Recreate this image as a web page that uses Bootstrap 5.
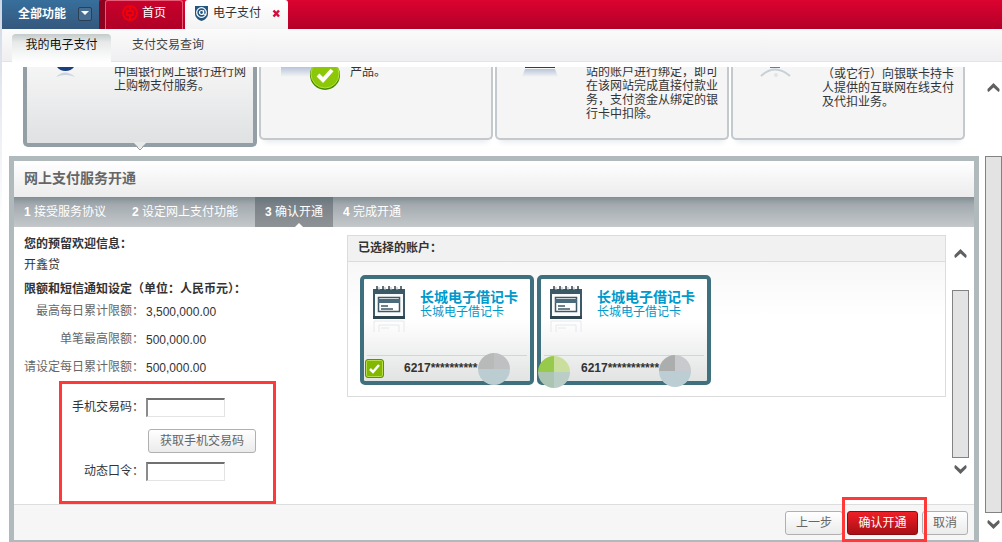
<!DOCTYPE html>
<html lang="zh-CN">
<head>
<meta charset="utf-8">
<meta name="viewport" content="width=device-width, initial-scale=1">
<title>电子支付</title>
<link href="https://cdn.jsdelivr.net/npm/bootstrap@5.3.0/dist/css/bootstrap.min.css" rel="stylesheet">
<style>
body{font:12px/14px "Liberation Sans","Noto Sans CJK SC",sans-serif;color:#333;padding-left:2px;overflow:hidden;
  background:linear-gradient(#cdd8e6,#dfe4ec 30%,#fff) no-repeat 0 0/2px 225px #fff}
a{color:inherit;text-decoration:none}
p{margin:0}
/* top bar */
.topbar{height:29px;background:linear-gradient(#dc0330,#b30028)}
.all-btn{width:97px;border:0;color:#fff;font-weight:bold;padding:0 7px 2px 16px;background:linear-gradient(#376f9c,#35587d)}
.all-btn .drop{width:14px;height:14px;border:1px solid #2b3f55;border-radius:2px;background:#456e92}
.tab-home{margin:0 2px 0 6px;width:78px;color:#fff;border:1px solid #e85a76;border-bottom:0;border-radius:3px 3px 0 0;background:linear-gradient(#c8022c,#b00027)}
.tab-gap{box-shadow:-6px 0 #8a0420}
.tab-pay{width:103px;background:linear-gradient(#fff,#f3f3f3);border-radius:3px 3px 0 0;padding:0 7px 3px 9px;color:#333}
.x-btn{border:0;background:none;padding:0;width:9px}
.subnav{height:33px;background:linear-gradient(#fbfbfb,#efeff1);border-bottom:1px solid #e4e4e6;padding:5px 0 0 10px}
.subnav a{height:28px;line-height:22px;color:#444}
.subnav a.on{width:99px;margin-right:21px;color:#111;border-radius:4px 4px 0 0;background:linear-gradient(#c3cbcb,#e8eaea 30%,#fff)}
.stage{margin-top:5px}
/* services */
.services{display:grid;grid-template-columns:repeat(4,minmax(0,1fr));height:89px;overflow:hidden;gap:2px;margin:0 14px 0 21px}
.svc{height:73px;border:2px solid #c3c9cd;border-top:0;border-radius:0 0 5px 5px;background:#f5f5f5;box-shadow:0 7px 6px -5px #e6e8ea}
.svc .pic{width:89px;height:26px;flex:none}
.svc p{margin-top:-2px;white-space:nowrap}
.svc.low p{margin-top:0}
.svc.on{position:relative;height:80px;border:4px solid #949fa5;border-top:0;background:linear-gradient(#f5f5f5,#dfe1e2);box-shadow:none}
.svc.on .pic{width:87px}
.svc .notch{position:absolute;left:50%;bottom:-8px;margin-left:-7px}
/* panel */
.opening{margin-left:7px;border:5px solid #b0b9bc;border-bottom-width:2px}
.opening h1{font-size:14px;font-weight:bold;color:#666;height:36px;line-height:35px;margin:0;padding-left:10px;background:linear-gradient(#fff,#ececec)}
.steps{height:30px;line-height:30px;color:#fff;list-style:none;margin:0;padding:0;background:linear-gradient(#808e94,#a3aaaf 25%,#c4c8cb)}
.steps li{padding:0 10px}
.steps li:nth-child(1){padding-right:16px}
.steps li:nth-child(2){padding-right:17px}
.steps li.on{position:relative;background:linear-gradient(#66757c,#7b8388 30%,#8f9397)}
.steps li.on::after{content:"";position:absolute;left:50%;bottom:0;margin-left:1px;border:4px solid transparent;border-top:0;border-bottom-color:#fff}
.info{width:333px;flex:none;padding:6px 0 0 10px}
.info p{line-height:20px}
.info .welcome{line-height:22px}
.info .heading{line-height:16px;margin-top:6px}
.limits dt{width:120px;font-weight:normal;text-align:right;color:#666}
.limits>div{height:28px;gap:2px}
.limits dd{margin:2px 0 0}
.verify{margin-left:35px;width:217px;border:3px solid #ff3838;padding:8px 0 15px}
.verify>div{height:30px;gap:2px}
.verify label{width:82px;text-align:right}
.verify .code-row{margin-top:4px;padding-left:86px}
.verify input{width:79px;height:19px;padding:0 2px;border:solid;border-width:2px 1px 1px 2px;border-color:#707070 #e3e3e3 #e3e3e3 #8c8c8c;outline:0}
.btn-plain,.btn-go{height:24px;padding:0;line-height:20px;font-size:12px;border-radius:3px;border:1px solid #b0b0b0}
.btn-plain{color:#666;background:linear-gradient(#fff,#ebebeb)}
.btn-get{width:108px}
.btn-prev{width:58px}
.btn-cancel{width:46px}
.btn-go{color:#fff;border-color:#8c0a10;background:linear-gradient(#ef1f26,#a80f15);width:71px}
.accounts{margin:8px 6px 0 0;height:162px;border:1px solid #dcdcdc;background:linear-gradient(#f3f3f3,#fff 50%)}
.accounts h2{font-size:12px;line-height:25px;height:26px;font-weight:bold;margin:0;padding-left:10px;border-bottom:1px solid #dcdcdc;background:#f1f1f1}
.acct-list{gap:3px;padding:13px 12px}
.acct{position:relative;width:174px;height:110px;border:4px solid #3f707d;border-radius:5px;background:linear-gradient(#fff 40%,#e2e3e3)}
.acct .top{height:77px;padding:6px 0 0 7px;gap:14px;margin:0 3px;border-bottom:1px solid #d4d6d6}
.acct svg.cal{flex:none;margin-left:-2px}
.acct strong{display:block;font-size:14px;line-height:16px;color:#09c}
.acct .top div{color:#09c;padding-top:4px;white-space:nowrap}
.acct .no{font-weight:bold;padding-left:40px;line-height:24px}
.acct input{appearance:none;position:absolute;left:1px;bottom:3px;width:19px;height:19px;margin:0;border:1px solid #5d8f00;border-radius:3px;box-shadow:inset 0 0 0 1px #b5dd48;
  background:url("data:image/svg+xml,%3Csvg xmlns='http://www.w3.org/2000/svg' viewBox='0 0 17 17'%3E%3Cpath d='M4 9l3 3 6-7' fill='none' stroke='%23fff' stroke-width='2.5'/%3E%3C/svg%3E") #83b800}
.blot{position:absolute;width:32px;height:32px;border-radius:50%;right:20px;bottom:-4px;background:conic-gradient(#bfc0c1 25%,#bccdd2 0 75%,#b8b9b9 0)}
.blot.low{right:16px;bottom:-6px;background:conic-gradient(#c8cace 25%,#bccdd4 0 75%,#acaeae 0)}
.blot.green{left:-3px;right:auto;bottom:-7px;background:conic-gradient(#cadf9d 25%,#bacdc6 0 50%,#acc5b3 0 75%,#97c94a 0)}
.sbar{width:17px;flex:none}
.thumb{flex:1;width:17px;background:#e3e3e3;border:1px solid #828282}
.sbar svg{flex:none;display:block;margin:0 auto}
.inner-bar{margin:22px 5px 30px 0}
.inner-bar .thumb{margin:32px 0 7px}
.outer-bar{margin:16px 0 13px 6px}
.outer-bar .thumb{margin:64px 0 7px}
.foot{height:36px;border-top:1px solid #ddd;background:#f6f6f6;padding:6px 6px 0;gap:4px}
.marked{position:relative;height:24px}
.marked::after{content:"";position:absolute;inset:-14px -9px -7px -5px;border:3px solid #ff3838;pointer-events:none}
</style>
</head>
<body>
<svg class="d-none" aria-hidden="true">
  <symbol id="cal" viewBox="0 0 34 48">
    <path d="M2 5h30v27H2z" fill="#fafbfb" stroke="#3e5966" stroke-width="2"/>
    <path d="M1 4h32v5H1z" fill="#3e5966"/>
    <path d="M5 1v4m6-4v4m6-4v4m6-4v4m6-4v4" stroke="#2e4450" stroke-width="1.5"/>
    <path d="M7 2v3m6-3v3m6-3v3m6-3v3" stroke="#a9bac2" stroke-width="1"/>
    <path d="M1 31h32v3H1z" fill="#2e4652"/>
    <path d="M6.500 12.500h21v14h-21z" fill="#fff" stroke="#3e5966" stroke-width="1.500"/>
    <path d="M6 14h22v4H6z" fill="#4b6a7b"/>
    <path d="M9 21h7M9 24h12" stroke="#3e5966" stroke-width="1.500"/>
    <path d="M2 47V36h30v11M7 47v-7h20v7M9 43h8" fill="none" stroke="#e4e8ea"/>
  </symbol>
  <symbol id="up" viewBox="0 0 13 9"><path d="M.5 8V6l6-6 6 6v2l-1 1-5-4.500-5 4.500z" fill="#606060"/></symbol>
  <symbol id="down" viewBox="0 0 13 9"><path d="M.5 1v2l6 6 6-6V1l-1-1-5 4.500L1.500 0z" fill="#606060"/></symbol>
</svg>

<header class="topbar d-flex">
  <button class="all-btn d-flex align-items-center justify-content-between">全部功能
    <span class="drop d-flex align-items-center justify-content-center"><svg width="8" height="5" viewBox="0 0 8 5"><path d="M0 0h8L4 4z" fill="#fff"/></svg></span>
  </button>
  <a href="#" class="tab-home tab-gap d-flex align-items-center justify-content-center gap-1 pb-1">
    <svg width="16" height="16" viewBox="0 0 16 16" fill="none" stroke="#f00009" stroke-width="2"><circle cx="8" cy="8" r="7"/><path d="M5 6h6v4H5zM8 2v4m0 4v4"/></svg>首页</a>
  <div class="tab-pay d-flex align-items-center">
    <svg width="15" height="15" viewBox="0 0 15 15"><path d="M1 0h13v8c0 3-3 6-6.500 7C4 14 1 11 1 8z" fill="#24577f"/><circle cx="7.500" cy="6.500" r="4.800" fill="none" stroke="#fff" stroke-width="1.200"/><circle cx="7.500" cy="6.500" r="2" fill="none" stroke="#fff" stroke-width="1.200"/><path d="M9.700 4v4.300h2" fill="none" stroke="#fff"/></svg>
    <a href="#" class="ms-1 me-auto text-nowrap">电子支付</a>
    <button class="x-btn" aria-label="关闭"><svg class="d-block" width="9" height="9" viewBox="0 0 9 9"><path d="M1.500 1.500l5.500 6m0-6l-5.500 6" stroke="#d0103a" stroke-width="2.500"/></svg></button>
  </div>
</header>
<nav class="subnav d-flex"><a href="#" class="on text-center">我的电子支付</a><a href="#">支付交易查询</a></nav>

<div class="stage d-flex">
<main class="flex-grow-1">
  <section class="services">
    <div class="svc on d-flex">
      <svg class="pic" viewBox="0 0 87 26"><path d="M30 0h17q-3 4-8.500 4T30 0z" fill="#173f82"/><path d="M29 10q9-9 19 0-9-4-19 0z" fill="#cbd3df"/></svg>
      <p>中国银行网上银行进行网<br>上购物支付服务。</p>
      <svg class="notch" width="14" height="9" viewBox="0 0 14 9"><path d="M1 1l6 6 6-6V0H1z" fill="#e8eaea"/><path d="M1 2l6 6 6-6" fill="none" stroke="#949fa5"/></svg>
    </div>
    <div class="svc d-flex">
      <svg class="pic" viewBox="0 0 89 26"><defs><linearGradient id="rf" x2="0" y2="1"><stop stop-color="#b8c5da"/><stop offset="1" stop-color="#f5f5f5"/></linearGradient></defs><path d="M20 0h34v10H20z" fill="url(#rf)"/><circle cx="64" cy="8" r="15" fill="#4b8b00"/><circle cx="64" cy="7" r="14" fill="#8cc808" stroke="#b1e23d"/><path d="M57 8l5 5 9-10" fill="none" stroke="#fff" stroke-width="4"/></svg>
      <p>产品。</p>
    </div>
    <div class="svc d-flex">
      <svg class="pic" viewBox="0 0 89 26"><path d="M28 0h30v1H28z" fill="#173f82"/><path d="M28 2h30l3 8H25z" fill="url(#rf)"/></svg>
      <p>站的账户进行绑定，即可<br>在该网站完成直接付款业<br>务，支付资金从绑定的银<br>行卡中扣除。</p>
    </div>
    <div class="svc low d-flex">
      <svg class="pic" viewBox="0 0 89 26"><path d="M37 0h10v1H37z" fill="#5d7cad"/><path d="M28 9q14-13 29 0" fill="none" stroke="#c5d0d8" stroke-width="2"/><circle cx="43" cy="8" r="2" fill="#e0e4e8"/></svg>
      <p>（或它行）向银联卡持卡<br>人提供的互联网在线支付<br>及代扣业务。</p>
    </div>
  </section>

  <section class="opening">
    <h1>网上支付服务开通</h1>
    <ol class="steps d-flex">
      <li><b>1</b> 接受服务协议</li><li><b>2</b> 设定网上支付功能</li><li class="on"><b>3</b> 确认开通</li><li><b>4</b> 完成开通</li>
    </ol>
    <div class="d-flex">
      <div class="info">
        <p class="welcome fw-bold">您的预留欢迎信息：</p>
        <p>开鑫贷</p>
        <p class="heading fw-bold">限额和短信通知设定（单位：人民币元）：</p>
        <dl class="limits m-0">
          <div class="d-flex align-items-center"><dt>最高每日累计限额：</dt><dd>3,500,000.00</dd></div>
          <div class="d-flex align-items-center"><dt>单笔最高限额：</dt><dd>500,000.00</dd></div>
          <div class="d-flex align-items-center"><dt>请设定每日累计限额：</dt><dd>500,000.00</dd></div>
        </dl>
        <form class="verify">
          <div class="d-flex align-items-center"><label for="sms">手机交易码：</label><input id="sms" type="text"></div>
          <div class="code-row d-flex align-items-center"><button type="button" class="btn-plain btn-get">获取手机交易码</button></div>
          <div class="d-flex align-items-center"><label for="otp">动态口令：</label><input id="otp" type="text"></div>
        </form>
      </div>
      <div class="accounts flex-grow-1">
        <h2>已选择的账户：</h2>
        <div class="acct-list d-flex">
          <div class="acct">
            <div class="top d-flex"><svg class="cal" width="34" height="48"><use href="#cal"/></svg><div><strong>长城电子借记卡</strong>长城电子借记卡</div></div>
            <input type="checkbox" id="a1" checked><label class="no" for="a1">6217**********</label>
            <span class="blot"></span>
          </div>
          <div class="acct">
            <div class="top d-flex"><svg class="cal" width="34" height="48"><use href="#cal"/></svg><div><strong>长城电子借记卡</strong>长城电子借记卡</div></div>
            <span class="no d-inline-block">6217***********</span>
            <span class="blot green"></span><span class="blot low"></span>
          </div>
        </div>
      </div>
      <div class="sbar inner-bar d-flex flex-column">
        <svg width="13" height="9"><use href="#up"/></svg>
        <div class="thumb"></div>
        <svg width="13" height="9"><use href="#down"/></svg>
      </div>
    </div>
    <div class="foot d-flex justify-content-end">
      <button class="btn-plain btn-prev">上一步</button>
      <span class="marked"><button class="btn-go">确认开通</button></span>
      <button class="btn-plain btn-cancel">取消</button>
    </div>
  </section>
</main>
<div class="sbar outer-bar d-flex flex-column">
  <svg width="13" height="9"><use href="#up"/></svg>
  <div class="thumb"></div>
  <svg width="13" height="9"><use href="#down"/></svg>
</div>
</div>
<script src="https://cdn.jsdelivr.net/npm/bootstrap@5.3.0/dist/js/bootstrap.bundle.min.js"></script>
</body>
</html>
